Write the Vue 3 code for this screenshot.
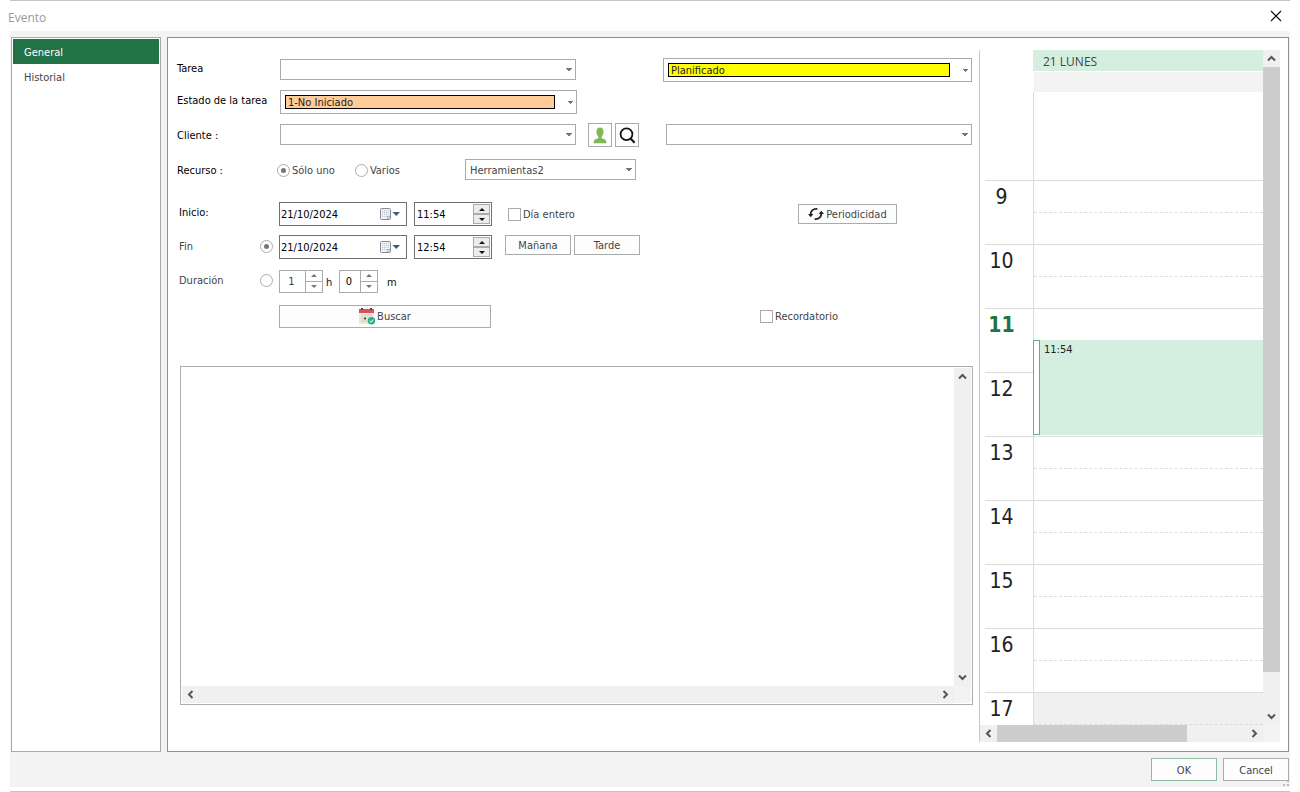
<script setup>
import { ref } from 'vue'

const sections = ['General', 'Historial']
const activeSection = ref('General')
const mode = ref('uno')
const endMode = ref('fin')
const hours = [9, 10, 11, 12, 13, 14, 15, 16, 17]
const startDate = ref('21/10/2024')
const endDate = ref('21/10/2024')
const startTime = ref('11:54')
const endTime = ref('12:54')
const durationHours = ref('1')
const durationMinutes = ref('0')
const allDay = ref(false)
const reminder = ref(false)
const notes = ref('')
</script>

<template>
  <div class="window">
    <header class="titlebar">
      <h1>Evento</h1>
      <button class="close" aria-label="Cerrar">
        <svg width="12" height="12" viewBox="0 0 12 12"><path d="M1 1l10 10M11 1L1 11" stroke="#111" stroke-width="1.2" fill="none" /></svg>
      </button>
    </header>

    <div class="body">
      <div class="panels">
        <nav class="sidebar">
          <button
            v-for="s in sections"
            :key="s"
            class="nav-item"
            :class="{ active: s === activeSection }"
            @click="activeSection = s"
          >{{ s }}</button>
        </nav>

        <main class="main">
          <form class="form" @submit.prevent>
            <div class="rows">
              <div class="row">
                <label class="label strong high" for="tarea">Tarea</label>
                <div class="combo wide">
                  <select id="tarea"><option></option></select>
                  <svg class="arrow" viewBox="0 0 6 3"><path d="M0 0h6v1h-1v1h-1v1h-2v-1h-1v-1h-1z" /></svg>
                </div>
                <div class="combo framed status">
                  <select class="yellow" aria-label="Estado"><option>Planificado</option></select>
                  <svg class="arrow small" viewBox="0 0 5 3"><path d="M0 0h5v1h-1v1h-1v1h-1v-1h-1v-1h-1z" /></svg>
                </div>
              </div>

              <div class="row">
                <label class="label strong high" for="estado">Estado de la tarea</label>
                <div class="combo framed wide">
                  <select id="estado" class="orange"><option>1-No Iniciado</option></select>
                  <svg class="arrow small" viewBox="0 0 5 3"><path d="M0 0h5v1h-1v1h-1v1h-1v-1h-1v-1h-1z" /></svg>
                </div>
              </div>

              <div class="row">
                <label class="label strong low" for="cliente">Cliente :</label>
                <div class="combo wide">
                  <select id="cliente"><option></option></select>
                  <svg class="arrow" viewBox="0 0 6 3"><path d="M0 0h6v1h-1v1h-1v1h-2v-1h-1v-1h-1z" /></svg>
                </div>
                <div class="tools">
                  <button class="btn icon-btn" aria-label="Ficha de cliente">
                    <svg width="14" height="17" viewBox="0 0 14 17"><path d="M7 0.500C4.800 .5 3.500 2 3.500 4.500c0 2.200.7 4 1.800 5.100v1.600C3.500 12 1 12.300.7 14.500v1.700h12.600v-1.700c-.3-2.200-2.800-2.500-4.600-3.300V9.600c1.100-1.100 1.800-2.900 1.800-5.100C10.500 2 9.200.5 7 .5z" fill="#7fb955" /></svg>
                  </button>
                  <button class="btn icon-btn" aria-label="Buscar cliente">
                    <svg width="17" height="17" viewBox="0 0 17 17"><circle cx="7.500" cy="7.200" r="5.900" fill="none" stroke="#111" stroke-width="1.800" /><path d="M11.600 11.500l4 4.200" stroke="#111" stroke-width="2" /></svg>
                  </button>
                </div>
                <div class="combo grow">
                  <select aria-label="Contacto"><option></option></select>
                  <svg class="arrow" viewBox="0 0 6 3"><path d="M0 0h6v1h-1v1h-1v1h-2v-1h-1v-1h-1z" /></svg>
                </div>
              </div>

              <div class="row">
                <span class="label strong low">Recurso :</span>
                <div class="radios">
                  <label class="check"><input v-model="mode" type="radio" value="uno" />Sólo uno</label>
                  <label class="check"><input v-model="mode" type="radio" value="varios" />Varios</label>
                </div>
                <div class="combo resource">
                  <select aria-label="Recurso"><option>Herramientas2</option></select>
                  <svg class="arrow" viewBox="0 0 6 3"><path d="M0 0h6v1h-1v1h-1v1h-2v-1h-1v-1h-1z" /></svg>
                </div>
              </div>

              <div class="row start-row">
                <label class="label strong indent high" for="inicio">Inicio:</label>
                <div class="date">
                  <input id="inicio" v-model="startDate" type="text" />
                  <button class="cal" aria-label="Abrir calendario">
                    <svg width="21" height="14" viewBox="0 0 21 14"><rect x="1.500" y="1.500" width="10" height="11" rx="1" fill="#f1f3f6" stroke="#858a94" /><path d="M3 3h7v7H3z" fill="#c3cad8" /><path d="M3 4.500h7M3 6.500h7M3 8.500h7M4.500 3v7M6.500 3v7M8.500 3v7" stroke="#fff" stroke-width=".6" /><path d="M8.500 12.500v-3h3z" fill="#fff" stroke="#858a94" stroke-width=".6" /><path d="M13.500 5H21l-3.700 4z" fill="#41597f" /></svg>
                  </button>
                </div>
                <div class="time">
                  <input v-model="startTime" type="text" aria-label="Hora de inicio" />
                  <span class="spin"><button aria-label="Más"><i class="up"></i></button><button aria-label="Menos"><i class="down"></i></button></span>
                </div>
                <label class="check all-day"><input v-model="allDay" type="checkbox" />Día entero</label>
                <button class="btn period">
                  <svg width="16" height="14" viewBox="0 0 16 14"><path d="M2.700 7.800C2.300 4 5 1.600 9.300 2M13.300 6.200c.4 3.800-2.300 6.200-6.600 5.800" fill="none" stroke="#222" stroke-width="1.800" /><path d="M0 7h5.400L2.700 10.200zM16 7h-5.400L13.300 3.800z" fill="#222" /></svg>
                  <span>Periodicidad</span>
                </button>
              </div>

              <div class="row">
                <div class="label indent split">
                  <label for="fin">Fin</label>
                  <input v-model="endMode" type="radio" value="fin" aria-label="Usar fecha de fin" />
                </div>
                <div class="date">
                  <input id="fin" v-model="endDate" type="text" />
                  <button class="cal" aria-label="Abrir calendario">
                    <svg width="21" height="14" viewBox="0 0 21 14"><rect x="1.500" y="1.500" width="10" height="11" rx="1" fill="#f1f3f6" stroke="#858a94" /><path d="M3 3h7v7H3z" fill="#c3cad8" /><path d="M3 4.500h7M3 6.500h7M3 8.500h7M4.500 3v7M6.500 3v7M8.500 3v7" stroke="#fff" stroke-width=".6" /><path d="M8.500 12.500v-3h3z" fill="#fff" stroke="#858a94" stroke-width=".6" /><path d="M13.500 5H21l-3.700 4z" fill="#41597f" /></svg>
                  </button>
                </div>
                <div class="time">
                  <input v-model="endTime" type="text" aria-label="Hora de fin" />
                  <span class="spin"><button aria-label="Más"><i class="up"></i></button><button aria-label="Menos"><i class="down"></i></button></span>
                </div>
                <div class="halves">
                  <button class="btn"><span>Mañana</span></button>
                  <button class="btn"><span>Tarde</span></button>
                </div>
              </div>

              <div class="row">
                <div class="label indent split">
                  <label for="horas">Duración</label>
                  <input v-model="endMode" type="radio" value="duracion" aria-label="Usar duración" />
                </div>
                <div class="number hours-box">
                  <input id="horas" v-model="durationHours" type="text" />
                  <span class="spin flat"><button aria-label="Más"><i class="up"></i></button><button aria-label="Menos"><i class="down"></i></button></span>
                </div>
                <label class="unit" for="horas">h</label>
                <div class="number">
                  <input id="minutos" v-model="durationMinutes" class="dark" type="text" />
                  <span class="spin flat"><button aria-label="Más"><i class="up"></i></button><button aria-label="Menos"><i class="down"></i></button></span>
                </div>
                <label class="unit minutes" for="minutos">m</label>
              </div>

              <div class="row search-row">
                <button class="btn search">
                  <svg width="17" height="17" viewBox="0 0 17 17"><path d="M0 2h15v14H0z" fill="#efe9dc" /><path d="M0 1h15v4H0z" fill="#d6505f" /><path d="M2 0h2v2H2zM11 0h2v2h-2z" fill="#5c3a45" /><path d="M2 7h11M2 10h11M2 13h7M3 6v8M6 6v8M9 6v8M12 6v4" stroke="#d6cebd" stroke-width=".8" /><path d="M5 9.500h2v2H5z" fill="#555" /><circle cx="12.500" cy="12.800" r="3.700" fill="#2fae8d" /><path d="M10.700 12.800l1.400 1.400 2.400-2.600" stroke="#fff" fill="none" /></svg>
                  <span>Buscar</span>
                </button>
                <label class="check reminder"><input v-model="reminder" type="checkbox" />Recordatorio</label>
              </div>
            </div>

            <div class="notes">
              <textarea v-model="notes" aria-label="Notas"></textarea>
              <div class="bar vertical">
                <svg class="chev" viewBox="0 0 17 17"><path d="M5 10.500l3.500-3.500 3.500 3.500" /></svg>
                <svg class="chev" viewBox="0 0 17 17"><path d="M5 6.500l3.500 3.500 3.500-3.500" /></svg>
              </div>
              <div class="bar horizontal">
                <svg class="chev" viewBox="0 0 17 17"><path d="M10.500 5L7 8.500l3.500 3.500" /></svg>
                <svg class="chev" viewBox="0 0 17 17"><path d="M6.500 5l3.500 3.500-3.500 3.500" /></svg>
              </div>
              <div class="corner"></div>
            </div>
          </form>

          <section class="calendar">
            <div class="day-view">
              <div class="day-head">21 LUNES</div>
              <div class="day-sub"></div>
              <div class="all-day-area"></div>
              <div class="hours">
                <div v-for="h in hours" :key="h" class="hour" :class="{ now: h === 11, off: h === 17 }">
                  <span class="hour-label">{{ h }}</span>
                  <div class="slot"><div class="half"></div></div>
                </div>
                <div class="event"><span class="event-mark"></span><span class="event-time">11:54</span></div>
              </div>
            </div>
            <div class="bar vertical">
              <svg class="chev" viewBox="0 0 17 17"><path d="M5 10.500l3.500-3.500 3.500 3.500" /></svg>
              <div class="track"><div class="thumb-v"></div></div>
              <svg class="chev" viewBox="0 0 17 17"><path d="M5 6.500l3.500 3.500 3.500-3.500" /></svg>
            </div>
            <div class="bar horizontal">
              <svg class="chev" viewBox="0 0 17 17"><path d="M10.500 5L7 8.500l3.500 3.500" /></svg>
              <div class="track"><div class="thumb-h"></div></div>
              <svg class="chev" viewBox="0 0 17 17"><path d="M6.500 5l3.500 3.500-3.500 3.500" /></svg>
            </div>
            <div class="corner"></div>
          </section>
        </main>
      </div>

      <footer class="footer">
        <button class="btn ok"><span>OK</span></button>
        <button class="btn"><span>Cancel</span></button>
        <svg class="grip" width="6" height="5" viewBox="0 0 6 5"><path d="M4 0h2v1H4zM0 3h2v2H0zM4 3h2v2H4z" fill="#b8b8b8" /></svg>
      </footer>
    </div>
  </div>
</template>

<style>
body { background: #fff; }
</style>

<style scoped>
* { box-sizing: border-box; }
.window {
  height: 100vh;
  min-height: 640px;
  margin: 0 10px;
  display: flex;
  flex-direction: column;
  border-top: 1px solid #c3c3c3;
  border-bottom: 1px solid #c3c3c3;
  background: #fff;
  color: #444;
  font-family: "DejaVu Sans Condensed", "DejaVu Sans", sans-serif;
  font-size: 11px;
  line-height: 14px;
}
button, input, select, textarea {
  font: inherit;
  color: inherit;
  margin: 0;
  padding: 0;
  border: 0;
  border-radius: 0;
  background: none;
  outline: none;
}
svg { display: block; flex: none; }
.titlebar {
  height: 30px;
  flex: none;
  display: flex;
  justify-content: space-between;
  align-items: center;
  padding-right: 8px;
}
h1 {
  margin: 0 0 0 -2px;
  padding-top: 4px;
  font: 400 12px/16px "Open Sans", sans-serif;
  color: #999;
}
.close { width: 12px; height: 12px; }
.body {
  flex: 1;
  min-height: 0;
  display: flex;
  flex-direction: column;
  margin-bottom: 4px;
  padding: 6px 1px 0;
  background: #f3f3f3;
}
.panels { flex: 1; min-height: 0; display: flex; gap: 6px; }
.sidebar {
  flex: none;
  width: 150px;
  padding: 1px;
  border: 1px solid #a7a9ab;
  background: #fff;
}
.nav-item {
  display: block;
  width: 100%;
  height: 25px;
  padding: 2px 0 0 11px;
  text-align: left;
}
.nav-item.active { background: #217346; color: #fff; }
.main {
  flex: 1;
  min-width: 0;
  display: flex;
  border: 1px solid #8f8f8f;
  background: #fff;
  padding: 12px 8px 9px 9px;
}
.form {
  flex: 1;
  min-width: 0;
  display: flex;
  flex-direction: column;
  padding: 4px 6px 37px 0;
}
.rows {
  display: grid;
  grid-template-rows: 32px 32px 34px 36px 42px 34px 34px 36px;
  padding-right: 1px;
}
.row { display: flex; align-items: center; min-width: 0; }
.start-row { padding-top: 10px; }
.label { flex: none; width: 103px; }
.label.indent { width: 102px; padding-left: 2px; }
.label.low { padding-top: 2px; }
.label.high { padding-bottom: 2px; }
.strong { color: #000; }
.split { display: flex; align-items: center; justify-content: space-between; padding-right: 6px; }
.split input { margin-bottom: 2px; }
.combo {
  display: flex;
  align-items: center;
  height: 21px;
  margin-bottom: 1px;
  border: 1px solid #ababab;
  background: #fff;
  padding-right: 3px;
}
.combo select {
  flex: 1;
  min-width: 0;
  height: 100%;
  padding: 2px 0 0 4px;
  appearance: none;
}
.arrow { width: 6px; height: 3px; fill: #777; }
.arrow.small { width: 5px; height: 3px; }
.wide { flex: none; width: 296px; }
.combo.framed { height: 24px; margin-bottom: 0; padding: 0 3px 0 4px; }
.framed.wide { width: 297px; }
.combo.framed select {
  height: 14px;
  margin-right: 13px;
  padding: 1px 0 0 2px;
  border: 1px solid #000;
  color: #222;
  line-height: 12px;
}
.orange { background: #ffcc99; }
.yellow { background: #ffff00; }
.status { flex: 1; margin-left: 86px; }
.row > .wide + .status { margin-left: 87px; }
.tools { display: flex; gap: 3px; margin: 0 27px 0 12px; }
.grow { flex: 1; }
.btn {
  display: flex;
  align-items: center;
  justify-content: center;
  border: 1px solid #ababab;
  background: #fdfdfd;
}
.btn span { padding-top: 2px; }
.icon-btn { width: 24px; height: 24px; }
.radios { display: flex; width: 188px; gap: 20px; margin-left: -3px; }
.resource { width: 171px; }
.check { display: flex; align-items: center; gap: 2px; padding-top: 2px; }
.check input { margin-bottom: 2px; }
input[type="radio"], input[type="checkbox"] {
  appearance: none;
  flex: none;
  width: 13px;
  height: 13px;
  border: 1px solid #ababab;
  background: #fff;
}
input[type="checkbox"]:checked { background: #217346; }
input[type="radio"] { border-radius: 50%; display: grid; place-items: center; }
input[type="radio"]:checked::before {
  content: "";
  width: 5px;
  height: 5px;
  border-radius: 50%;
  background: #777;
}
.date, .time {
  display: flex;
  align-items: center;
  flex: none;
  height: 24px;
  border: 1px solid #707070;
  background: #fff;
  color: #000;
}
.date { width: 128px; padding: 0 6px 0 1px; }
.time { width: 78px; margin-left: 7px; padding: 1px 1px 1px 2px; }
.date input, .time input, .number input { flex: 1; min-width: 0; height: 100%; }
.spin { flex: none; width: 17px; height: 100%; display: flex; flex-direction: column; }
.spin button {
  flex: 1;
  display: grid;
  place-items: center;
  border: 1px solid #ababab;
  background: #ececec;
}
.spin i { border: 3px solid transparent; }
.spin .up { border-top: 0; border-bottom-color: #111; }
.spin .down { border-bottom: 0; border-top-color: #111; }
.spin.flat { border-left: 1px solid #ababab; }
.spin.flat button { border: 0; background: #fff; }
.spin.flat button + button { border-top: 1px solid #ababab; }
.spin.flat .up { border-bottom-color: #777; }
.spin.flat .down { border-top-color: #777; }
.number {
  display: flex;
  flex: none;
  width: 39px;
  height: 23px;
  border: 1px solid #ababab;
}
.hours-box { width: 44px; }
.number input { text-align: center; padding-right: 2px; }
.number .dark { color: #000; }
.unit { width: 16px; padding: 4px 0 0 3px; color: #111; }
.minutes { padding-left: 9px; width: 24px; }
.all-day { margin-left: 16px; }
.period { width: 99px; height: 20px; gap: 2px; margin: 0 75px 0 auto; }
.halves { display: flex; gap: 3px; margin: 0 0 4px 13px; }
.halves .btn { width: 66px; height: 20px; }
.search-row { padding-left: 102px; }
.search { width: 212px; height: 23px; gap: 1px; }
.reminder { margin: 0 134px 0 auto; }
.notes, .calendar {
  display: grid;
  grid-template: minmax(0, 1fr) 17px / minmax(0, 1fr) 17px;
}
.notes {
  flex: 1;
  min-height: 80px;
  margin: 32px 0 0 3px;
  border: 1px solid #abadb3;
  padding: 1px;
}
.notes textarea { width: 100%; height: 100%; resize: none; }
.bar { display: flex; justify-content: space-between; background: #f0f0f0; min-width: 0; min-height: 0; }
.vertical { flex-direction: column; }
.chev { width: 17px; height: 17px; fill: none; stroke: #555; stroke-width: 2; }
.track { flex: 1; }
.thumb-v { height: 94.4%; background: #cdcdcd; }
.thumb-h { width: 76.4%; height: 100%; background: #cdcdcd; }
.corner { background: #f3f3f3; }
.calendar { flex: none; width: 301px; border-left: 1px solid #c9c9c9; }
.day-view { overflow: hidden; min-height: 0; }
.day-head {
  height: 21px;
  margin-left: 53px;
  padding-left: 10px;
  background: #d4efe0;
  font: 400 12px/23px "Open Sans", sans-serif;
}
.day-sub { height: 20px; margin: 1px 0 0 54px; background: #f3f3f3; }
.all-day-area { height: 88px; margin-left: 53px; border-left: 1px solid #dcdcdc; }
.hours { position: relative; }
.hour { display: flex; height: 64px; }
.hour-label {
  width: 48px;
  margin-left: 5px;
  padding: 5px 15px 0 0;
  border-top: 1px solid #dcdcdc;
  text-align: center;
  font-size: 21px;
  line-height: 22px;
  color: #222;
}
.now .hour-label { font-weight: 700; color: #217346; }
.slot { flex: 1; border-left: 1px solid #dcdcdc; border-top: 1px solid #dcdcdc; }
.half { height: 32px; border-bottom: 1px dashed #dcdcdc; }
.off .slot { background: #f0f0f0; }
.event {
  position: absolute;
  left: 53px;
  right: 0;
  top: 160px;
  height: 95px;
  display: flex;
  background: #d4efe0;
}
.event-mark { width: 7px; border: 1px solid #62b083; background: #fff; }
.event-time { padding: 3px 0 0 4px; color: #222; }
.footer {
  position: relative;
  flex: none;
  display: flex;
  justify-content: flex-end;
  gap: 6px;
  padding: 6px 0;
}
.footer .btn { width: 66px; height: 23px; }
.footer .ok { border-color: #8fbba2; }
.grip { position: absolute; right: 0; bottom: 1px; }
</style>
